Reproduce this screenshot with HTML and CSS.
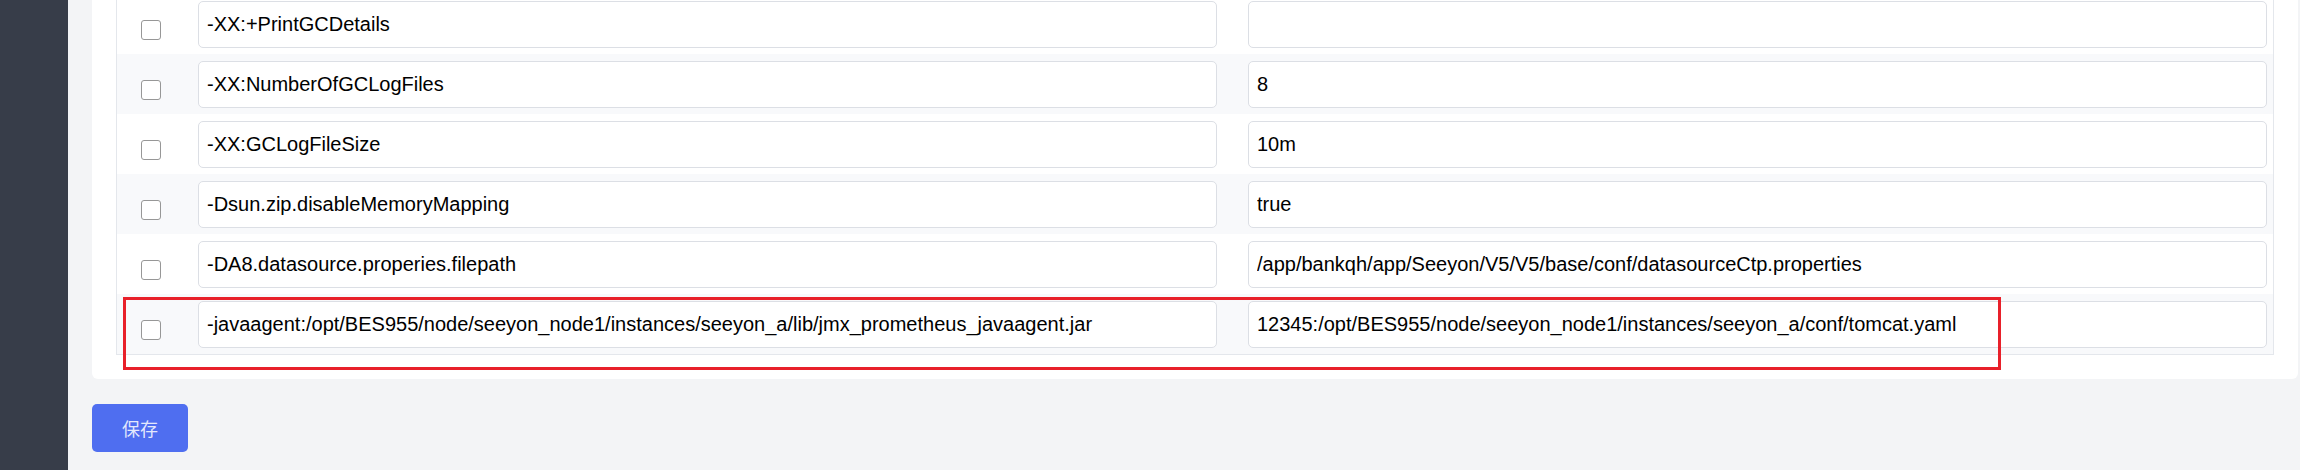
FILE: index.html
```html
<!DOCTYPE html>
<html lang="zh-CN">
<head>
    <meta charset="UTF-8">
    <meta name="viewport" content="width=device-width, initial-scale=1.0">
    <title>JVM 参数</title>
    <link rel="stylesheet" href="styles.css">
</head>
<body>
    <aside class="sidebar"></aside>

    <main class="content">
        <div class="card">
            <div class="param-table">
                <div class="param-row">
                    <input type="checkbox" class="row-check">
                    <input type="text" class="field" value="-XX:+PrintGCDetails">
                    <input type="text" class="field" value="">
                </div>
                <div class="param-row">
                    <input type="checkbox" class="row-check">
                    <input type="text" class="field" value="-XX:NumberOfGCLogFiles">
                    <input type="text" class="field" value="8">
                </div>
                <div class="param-row">
                    <input type="checkbox" class="row-check">
                    <input type="text" class="field" value="-XX:GCLogFileSize">
                    <input type="text" class="field" value="10m">
                </div>
                <div class="param-row">
                    <input type="checkbox" class="row-check">
                    <input type="text" class="field" value="-Dsun.zip.disableMemoryMapping">
                    <input type="text" class="field" value="true">
                </div>
                <div class="param-row">
                    <input type="checkbox" class="row-check">
                    <input type="text" class="field" value="-DA8.datasource.properies.filepath">
                    <input type="text" class="field" value="/app/bankqh/app/Seeyon/V5/V5/base/conf/datasourceCtp.properties">
                </div>
                <div class="param-row">
                    <input type="checkbox" class="row-check">
                    <input type="text" class="field" value="-javaagent:/opt/BES955/node/seeyon_node1/instances/seeyon_a/lib/jmx_prometheus_javaagent.jar">
                    <input type="text" class="field" value="12345:/opt/BES955/node/seeyon_node1/instances/seeyon_a/conf/tomcat.yaml">
                    <div class="highlight"></div>
                </div>
            </div>
        </div>

        <button type="button" class="save-btn">保存</button>
    </main>
</body>
</html>
```

FILE: styles.css
```css
html, body {
    margin: 0;
    height: 100%;
}

body {
    display: flex;
    overflow: hidden;
    font-family: "Liberation Sans", Arial, "Noto Sans CJK SC", sans-serif;
    background-color: #f3f4f6;
    color: #000;
}

.sidebar {
    width: 68px;
    flex-shrink: 0;
    background-color: #373d49;
}

.content {
    flex: 1;
    padding: 0 2px 0 24px;
}

.card {
    margin-top: -31px;
    padding: 24px;
    background-color: #ffffff;
    border-radius: 0 0 6px 6px;
}

.param-table {
    border: 1px solid #e4e7ec;
}

.param-row {
    position: relative;
    display: grid;
    grid-template-columns: 26px 1fr 1fr;
    column-gap: 31px;
    align-items: start;
    height: 60px;
    box-sizing: border-box;
    padding: 7px 6px 0 24px;
    background-color: #ffffff;
}

.param-row:nth-child(even) {
    background-color: #f8f9fb;
}

.row-check {
    appearance: none;
    width: 20px;
    height: 20px;
    margin: 19px 0 0 0;
    box-sizing: border-box;
    border: 1px solid #979797;
    border-radius: 3px;
    background-color: #ffffff;
}

.field {
    width: 100%;
    height: 47px;
    box-sizing: border-box;
    padding: 0 8px;
    border: 1px solid #dcdfe5;
    border-radius: 5px;
    font-family: inherit;
    font-size: 20px;
    color: #000;
    background-color: #ffffff;
    outline: none;
}

.highlight {
    position: absolute;
    left: 6px;
    top: 3px;
    width: 1878px;
    height: 73px;
    box-sizing: border-box;
    border: 3px solid #e8202a;
    pointer-events: none;
}

.save-btn {
    margin-top: 25px;
    width: 96px;
    height: 48px;
    border: none;
    border-radius: 5px;
    background-color: #4f6ef0;
    color: rgba(255, 255, 255, 0.85);
    font-family: "Noto Sans CJK SC", sans-serif;
    font-size: 18px;
    cursor: pointer;
}
```
